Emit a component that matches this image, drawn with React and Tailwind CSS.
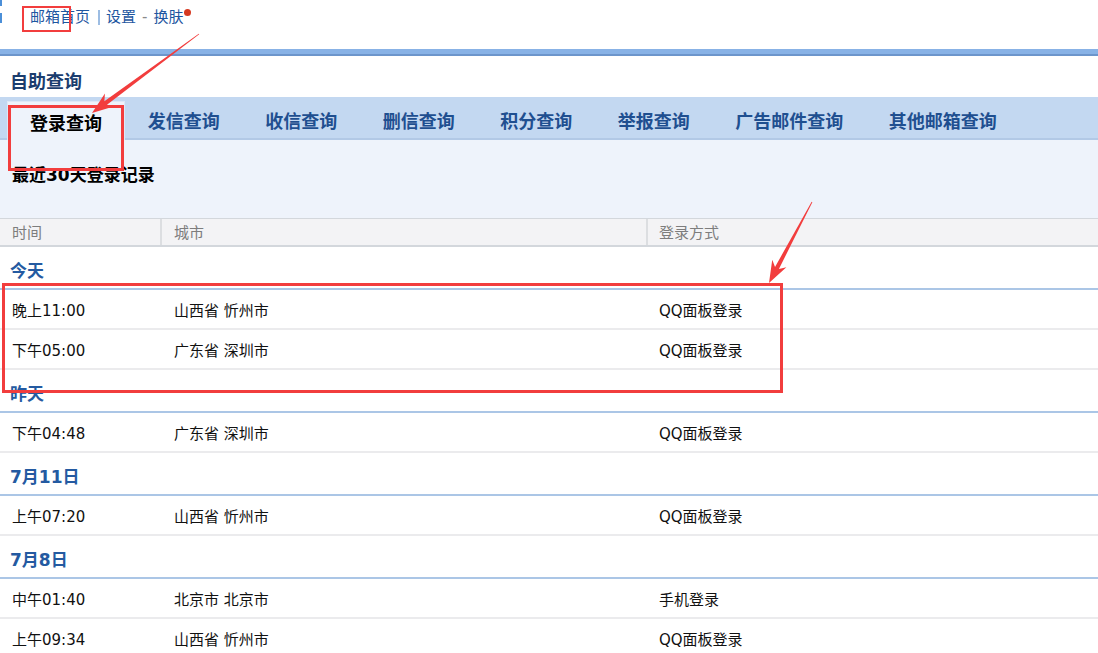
import React from "react";

const tabs = ["登录查询", "发信查询", "收信查询", "删信查询", "积分查询", "举报查询", "广告邮件查询", "其他邮箱查询"];

const groups = [
  { title: "今天", rows: [["晚上11:00", "山西省 忻州市", "QQ面板登录"], ["下午05:00", "广东省 深圳市", "QQ面板登录"]] },
  { title: "昨天", rows: [["下午04:48", "广东省 深圳市", "QQ面板登录"]] },
  { title: "7月11日", rows: [["上午07:20", "山西省 忻州市", "QQ面板登录"]] },
  { title: "7月8日", rows: [["中午01:40", "北京市 北京市", "手机登录"], ["上午09:34", "山西省 忻州市", "QQ面板登录"]] },
];

function Arrow({ tail, tip, headLen = 22, headHalf = 8, shaftHalf = 2.2 }) {
  const dx = tip[0] - tail[0];
  const dy = tip[1] - tail[1];
  const len = Math.hypot(dx, dy);
  const ux = dx / len, uy = dy / len;
  const nx = -uy, ny = ux;
  const bx = tip[0] - ux * headLen, by = tip[1] - uy * headLen;
  const nbx = tip[0] - ux * (headLen - 5), nby = tip[1] - uy * (headLen - 5);
  const pts = [
    [tail[0] + nx * 0.4, tail[1] + ny * 0.4],
    [nbx + nx * shaftHalf, nby + ny * shaftHalf],
    [bx + nx * headHalf, by + ny * headHalf],
    tip,
    [bx - nx * headHalf, by - ny * headHalf],
    [nbx - nx * shaftHalf, nby - ny * shaftHalf],
    [tail[0] - nx * 0.4, tail[1] - ny * 0.4],
  ];
  return <polygon points={pts.map((p) => p.join(",")).join(" ")} fill="#f23d3d" />;
}

export default function App() {
  return (
    <div className="relative w-[1098px] h-[653px] overflow-hidden bg-white font-['DejaVu_Sans','Noto_Sans_CJK_SC',sans-serif]">
      {/* top links */}
      <div className="relative h-[49px]">
        <div className="absolute left-0 top-0 w-[2px] h-[6px] bg-[#4b8fd8]" />
        <div className="absolute left-0 top-[13px] w-[2px] h-[10px] bg-[#4b8fd8]" />
        <div className="flex items-center pl-[30px] pt-[8px] text-[15px] leading-[18px] text-[#1e56a0]">
          <span>邮箱首页</span>
          <span className="ml-[8px] mr-[6px] w-[2px] h-[15px] bg-[#9dbde3]" />
          <span>设置</span>
          <span className="mx-[6px] text-[#8a8a8a]">-</span>
          <span>换肤</span>
          <span className="ml-[1px] -mt-[10px] w-[7px] h-[7px] rounded-full bg-[#d63a22]" />
        </div>
      </div>
      <div className="h-[5px] bg-[#88b2e6]" />
      <div className="h-[2px] bg-[#6c95cb]" />

      <div className="h-[41px] pl-[10px] pt-[15px] text-[18px] leading-[22px] font-bold text-[#1b3d6e]">自助查询</div>

      {/* tabs */}
      <div className="flex items-end h-[43px] pl-[7px] bg-[#c3d8f1] border-b-2 border-[#b2c9e6]">
        {tabs.map((t, i) =>
          i === 0 ? (
            <div key={t} className="relative -mb-[2px] h-[39px] px-[22px] pt-[4px] flex items-center justify-center bg-[#eef3fb] border-t border-l border-r border-[#dde8f6] text-[18px] font-bold text-black">
              {t}
            </div>
          ) : (
            <div key={t} className="h-[37px] px-[22.75px] pt-[4px] flex items-center justify-center text-[18px] font-bold text-[#1f4f90]">
              {t}
            </div>
          )
        )}
      </div>

      <div className="h-[78px] bg-[#eef3fb] pl-[12px] pt-[24px] text-[17px] leading-[22px] font-bold text-black">最近30天登录记录</div>

      {/* header */}
      <div className="flex h-[29px] bg-[#f3f3f5] border-t border-b-2 border-[#d3d7dc] text-[15px] text-[#7d7d7d]">
        <div className="w-[162px] pl-[12px] pt-[2px] flex items-center border-r-2 border-[#dcdee1]">时间</div>
        <div className="w-[486px] pl-[12px] pt-[2px] flex items-center border-r-2 border-[#dcdee1]">城市</div>
        <div className="flex-1 pl-[11px] pt-[2px] flex items-center">登录方式</div>
      </div>

      {groups.map((g) => (
        <div key={g.title}>
          <div className="h-[43px] pl-[10px] pt-[9px] flex items-center border-b-2 border-[#abc6e6] text-[17px] font-bold text-[#245aa1]">
            {g.title}
          </div>
          {g.rows.map((r, i) => (
            <div key={i} className="flex h-[40px] pt-[5px] items-center border-b-2 border-[#ebebed] text-[15px] text-[#111]">
              <div className="w-[162px] pl-[12px]">{r[0]}</div>
              <div className="w-[486px] pl-[12px]">{r[1]}</div>
              <div className="flex-1 pl-[11px]">{r[2]}</div>
            </div>
          ))}
        </div>
      ))}

      {/* annotations */}
      <div className="absolute left-[22px] top-[6px] w-[49px] h-[26px] border-2 border-[#f23d3d] pointer-events-none" />
      <div className="absolute left-[8px] top-[105px] w-[116px] h-[66px] border-[3px] border-[#f23d3d] pointer-events-none" />
      <div className="absolute left-[2px] top-[283px] w-[781px] h-[110px] border-[3px] border-[#f23d3d] pointer-events-none" />
      <svg className="absolute inset-0 pointer-events-none" width="1098" height="653">
        <Arrow tail={[199, 34]} tip={[92, 113]} />
        <Arrow tail={[812, 202]} tip={[769, 283]} />
      </svg>
    </div>
  );
}
